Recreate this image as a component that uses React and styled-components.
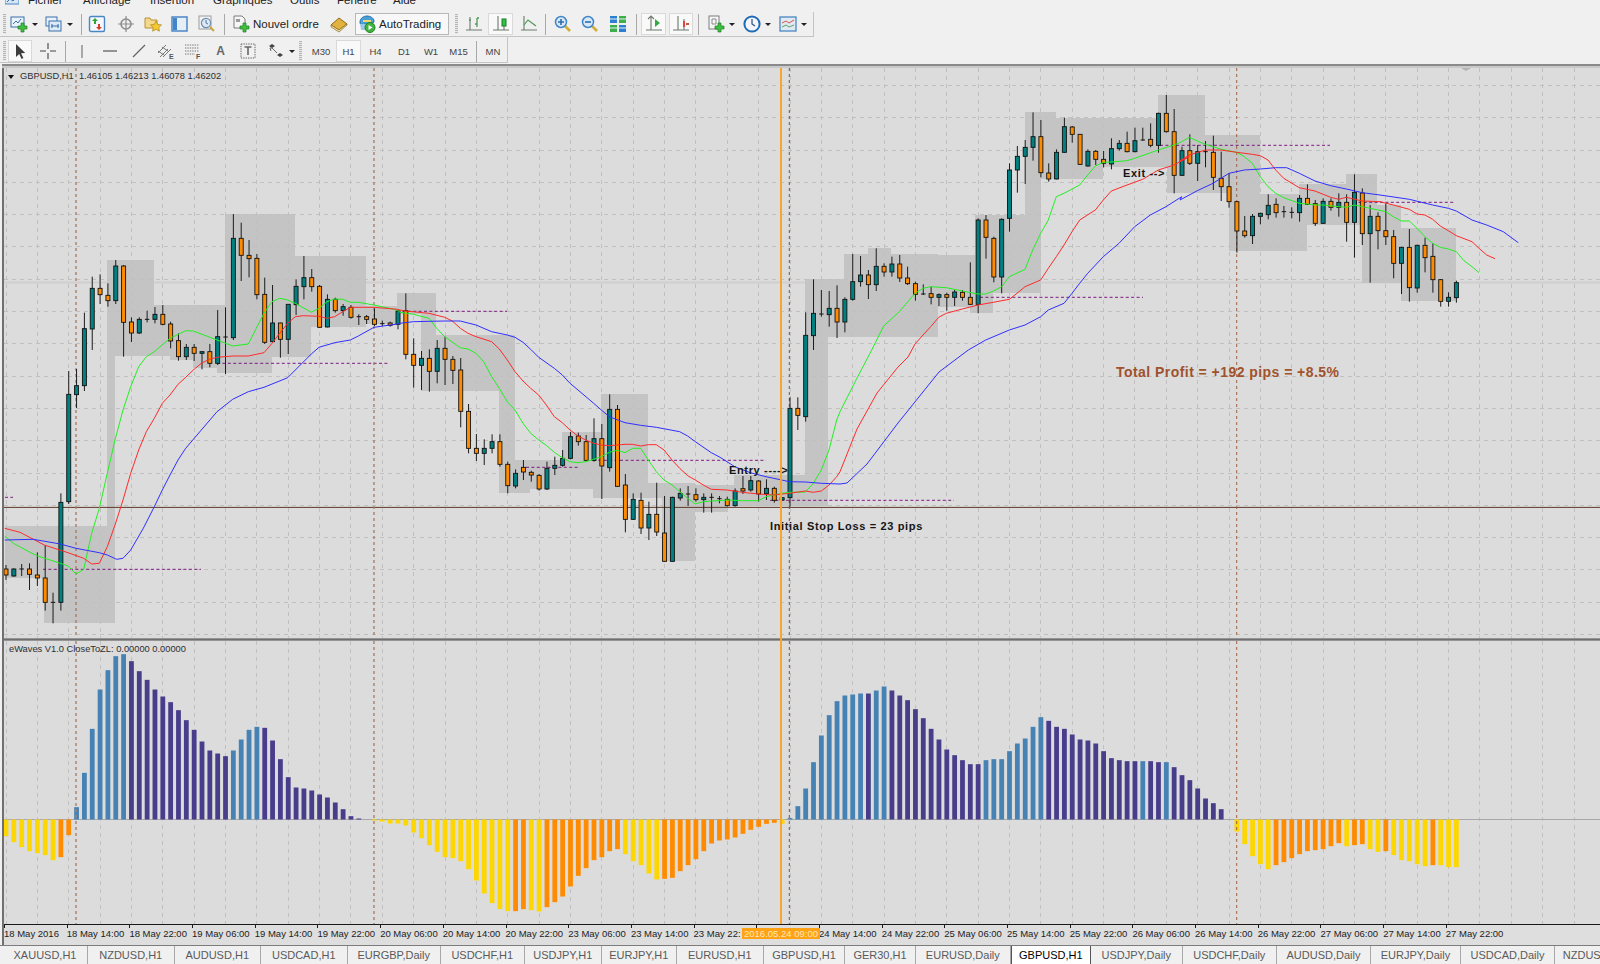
import styled, { createGlobalStyle } from "styled-components";

const GlobalStyle = createGlobalStyle`
  html, body { margin: 0; padding: 0; background: #f0f0f0; }
  body { width: 1600px; height: 964px; overflow: hidden; font-family: "Liberation Sans", Arial, sans-serif; }
`;

const barX = (i) => 6 + 7.84 * i;

// candles, read from the chart: [high, top, bottom, low, colour]  O orange, T teal, D doji
// every group has its own y offset, values are 3x
const candleGroups = [
  { off: 200, start: 0, rows: [
    [1095,1107,1125,1140,"O"],[1105,1107,1128,1130,"T"],[1092,1107,1107,1128,"D"],[1090,1107,1123,1170,"O"],[1057,1125,1134,1158,"O"],[1035,1134,1207,1232,"O"],
    [1178,1207,1207,1270,"D"],[880,907,1207,1232,"T"],[513,583,905,912,"T"],[507,557,584,624,"T"],[338,386,557,573,"T"],[230,265,387,450,"T"],
    [223,265,284,312,"O"],[250,286,302,320,"O"],[180,198,302,312,"T"],[195,198,367,470,"O"],[352,366,399,426,"O"],[352,358,399,402,"T"],
    [332,358,358,367,"D"],[321,343,358,370,"T"],[315,343,373,376,"O"],[365,372,423,445,"O"],[400,422,470,482,"O"],[432,442,470,480,"T"],
    [432,442,460,483,"O"],[455,455,460,508,"T"],[432,455,490,502,"O"],[330,410,490,495,"T"],[322,411,411,522,"D"],[42,115,413,420,"T"],
    [68,115,166,243,"O"],[120,166,176,232,"O"],[162,175,284,298,"O"],[233,283,427,432,"O"],[255,369,425,428,"T"],[368,369,418,473,"O"],
    [313,313,418,462,"T"],[238,259,314,345,"T"],[168,233,260,298,"T"],[207,233,260,275,"O"],[255,259,382,384,"O"],[283,298,381,382,"T"],
    [293,298,332,338,"O"],[312,320,332,347,"T"],[315,322,352,356,"O"],[343,350,350,375,"D"],[345,350,358,372,"O"],[325,357,373,378,"O"],
    [362,371,371,378,"D"],[365,369,376,380,"O"],[330,333,373,388,"T"],
  ]},
  { off: 280, start: 51, rows: [
    [40,92,223,238,"O"],[175,223,256,323,"O"],[213,235,256,330,"T"],[208,235,274,335,"O"],[180,205,274,310,"T"],[170,205,238,315,"O"],
    [228,238,271,312,"O"],[234,270,394,442,"O"],[372,394,505,520,"O"],[462,505,520,543,"O"],[478,505,520,555,"T"],[463,485,505,520,"T"],
    [463,485,553,560,"O"],[545,553,617,640,"O"],[568,580,618,625,"T"],[540,562,576,600,"O"],[572,577,585,605,"O"],[582,586,627,632,"O"],
    [545,565,627,630,"T"],[530,556,565,585,"T"],[510,535,556,560,"T"],[456,470,535,538,"T"],[458,468,485,497,"O"],[465,485,541,545,"O"],
    [415,476,541,545,"T"],[432,476,558,657,"O"],[343,388,563,575,"T"],[375,388,619,620,"O"],[582,615,718,757,"O"],[640,658,718,720,"T"],
    [638,661,744,762,"O"],[665,703,744,780,"T"],[608,703,756,768,"O"],[648,759,844,845,"O"],[650,652,844,845,"T"],[625,640,654,662,"T"],
    [618,642,642,678,"D"],[625,644,659,665,"O"],[640,652,659,698,"T"],[640,652,652,698,"D"],[648,656,656,670,"D"],[650,658,677,680,"O"],
    [625,633,677,680,"T"],[588,626,633,642,"O"],[588,602,630,635,"T"],[600,603,642,665,"O"],[598,625,641,660,"T"],[620,625,661,668,"O"],
    [653,653,660,660,"T"],[352,385,653,680,"T"],[352,385,406,450,"O"],[97,166,410,425,"T"],
  ]},
  { off: 90, start: 103, rows: [
    [568,670,737,780,"T"],[600,672,672,680,"D"],[603,655,674,710,"T"],[586,655,696,744,"O"],[622,628,696,727,"T"],[492,575,628,632,"T"],
    [498,555,575,590,"T"],[540,555,584,627,"O"],[475,529,584,603,"T"],[520,529,546,560,"O"],[500,522,546,560,"T"],[495,522,564,576,"O"],
    [530,564,581,585,"O"],[575,581,613,632,"O"],[583,612,612,615,"D"],[590,611,622,643,"O"],[610,614,622,648,"T"],[608,614,622,662,"O"],
    [600,606,622,648,"T"],[600,607,622,632,"O"],[517,622,643,645,"O"],[385,390,643,670,"T"],[375,390,442,506,"O"],[440,445,561,577,"O"],
    [385,388,561,610,"T"],[220,240,385,425,"T"],[168,199,240,308,"T"],[150,172,199,282,"T"],[67,140,172,212,"T"],[90,140,248,262,"O"],
    [220,249,267,275,"O"],[178,187,267,268,"T"],[83,110,187,188,"T"],[108,111,133,158,"O"],[132,133,223,225,"O"],[178,184,228,230,"T"],
    [180,184,208,225,"O"],[183,208,220,232,"O"],[145,176,222,238,"T"],[150,160,176,182,"T"],[125,160,185,187,"O"],[113,152,185,187,"T"],
    [113,150,150,152,"D"],[100,148,166,172,"O"],[68,70,166,188,"T"],[15,70,125,128,"O"],[57,125,256,310,"O"],[170,182,256,258,"T"],
    [133,182,220,225,"O"],[165,185,220,273,"T"],
  ]},
  { off: 90, start: 153, rows: [
    [153,185,185,232,"D"],[137,187,262,300,"O"],[185,265,290,333,"O"],[250,290,335,353,"O"],[333,335,423,488,"O"],[378,423,437,443,"O"],
    [372,379,437,462,"T"],[368,370,379,403,"T"],[313,346,374,388,"T"],[325,343,368,383,"O"],[348,365,365,383,"D"],[352,367,367,385,"D"],
    [315,325,368,395,"T"],[283,325,343,345,"O"],[330,341,400,408,"O"],[325,334,400,402,"T"],[325,334,352,362,"O"],[310,337,352,380,"T"],
    [313,337,397,455,"O"],[253,307,397,503,"T"],[295,309,431,465,"O"],[345,379,431,578,"T"],[367,379,422,478,"O"],[340,422,440,465,"O"],
    [420,440,520,565,"O"],[470,472,520,612,"T"],[417,472,593,635,"O"],[464,466,594,608,"T"],[443,466,503,547,"O"],[460,499,569,608,"O"],
    [567,569,634,650,"O"],[607,622,634,650,"T"],[572,578,623,638,"T"],
  ]},
];

const candles = candleGroups.flatMap((g) =>
  g.rows.map((r, n) => ({
    x: barX(g.start + n),
    hi: g.off + r[0] / 3,
    top: g.off + r[1] / 3,
    bot: g.off + r[2] / 3,
    lo: g.off + r[3] / 3,
    kind: r[4],
  }))
);

// grey session boxes [x1, y1, x2, y2], 3x, grouped by the crop they were read from
const boxGroups = [
  { ox: 0, oy: 200, rows: [
    [14,978,345,1135],[133,1135,345,1268],[321,468,345,978],[321,180,462,468],[462,315,675,468],[510,468,580,480],[580,468,650,505],
    [650,468,815,520],[675,42,885,468],[885,168,1097,382],[885,382,933,470],[815,468,885,470],[1050,318,1192,373],[1097,318,1192,373],
  ]},
  { ox: 400, oy: 280, rows: [
    [-9,40,108,103],[63,103,108,165],[63,165,345,332],[297,332,345,540],[297,540,486,628],[297,628,390,638],[486,455,604,628],
    [580,628,604,655],[604,343,745,655],[745,608,886,655],[785,655,886,842],[886,615,1003,678],[886,678,980,695],[1003,585,1215,678],[1215,0,1285,678],
  ]},
  { ox: 780, oy: 90, rows: [
    [76,568,145,1248],[145,568,193,742],[193,492,475,742],[264,475,333,492],[475,495,585,650],[570,650,640,668],[585,375,735,610],
    [585,610,640,650],[735,67,782,610],[782,67,827,268],[827,83,970,268],[970,83,1135,232],[1135,15,1160,232],[1160,15,1230,308],
  ]},
  { ox: 1180, oy: 90, rows: [
    [0,15,75,308],[75,135,148,308],[148,135,240,483],[240,313,380,483],[357,283,498,405],[498,253,592,405],[545,405,662,578],
    [592,345,662,405],[662,415,828,632],
  ]},
];

const boxes = boxGroups.flatMap((g) =>
  g.rows.map((r) => ({
    x: g.ox + r[0] / 3,
    y: g.oy + r[1] / 3,
    w: (r[2] - r[0]) / 3,
    h: (r[3] - r[1]) / 3,
  }))
);

const pts = (ox, oy, arr) => arr.map(([x, y]) => `${(ox + x / 3).toFixed(1)},${(oy + y / 3).toFixed(1)}`).join(" ");

const greenLine = [
  pts(0, 200, [[14,1008],[40,1030],[87,1055],[110,1067],[181,1090],[204,1098],[228,1122],[251,1108],[275,1000],[298,925],[322,820],[345,720],[369,630],[392,560],[416,500],[439,470],[463,455],[510,415],[557,392],[580,393],[651,420],[698,438],[745,432],[769,385],[792,340],[816,305],[839,295],[863,300],[886,310],[934,337],[957,325],[981,305],[1004,297],[1028,298],[1051,307],[1075,307],[1122,315],[1192,330]]),
  pts(400, 280, [[0,97],[40,103],[87,115],[110,145],[134,170],[181,203],[204,207],[228,220],[251,245],[275,290],[298,325],[322,365],[345,390],[369,430],[392,460],[416,480],[440,497],[463,517],[487,533],[510,545],[534,548],[557,545],[581,538],[604,530],[628,517],[652,511],[675,518],[698,505],[722,505],[745,540],[769,575],[792,600],[816,615],[839,635],[863,655],[886,672],[910,665],[934,663],[957,662],[981,660],[1027,662],[1075,662],[1098,650],[1122,645],[1145,640],[1168,637],[1216,636],[1240,610],[1264,570],[1287,510],[1310,420],[1320,395]]),
  "856,380",
  pts(780, 90, [[275,780],[311,708],[358,665],[405,610],[429,595],[452,590],[499,593],[547,603],[594,612],[617,612],[640,603],[665,590],[688,560],[735,538],[758,480],[782,430],[805,390],[829,320],[852,310],[899,285],[923,255],[946,228],[970,217],[994,216],[1041,212],[1064,205],[1135,180],[1182,165],[1205,155],[1228,142]]),
  pts(1180, 90, [[52,153],[76,163],[123,178],[170,187],[193,200],[217,220],[241,260],[264,290],[287,310],[311,323],[358,340],[382,342],[405,345],[429,345],[476,350],[499,352],[523,345],[547,350],[594,360],[617,365],[640,380],[664,393],[688,393],[711,415],[735,440],[758,460],[781,472],[805,477],[829,485],[852,512],[876,530],[897,548]]),
].join(" ");

const redLine = [
  pts(0, 200, [[14,985],[60,997],[133,1035],[204,1058],[251,1075],[275,1092],[298,1090],[322,1040],[345,975],[369,900],[392,820],[416,750],[439,695],[463,655],[487,610],[510,585],[534,553],[557,532],[580,510],[604,490],[628,478],[651,472],[698,468],[745,468],[792,458],[816,430],[839,400],[863,370],[886,350],[910,347],[957,349],[981,355],[1004,350],[1028,335],[1051,322],[1122,322],[1192,328]]),
  pts(400, 280, [[0,90],[16,93],[87,100],[134,112],[157,123],[181,145],[204,160],[228,170],[275,185],[298,207],[322,240],[345,275],[369,303],[392,325],[416,345],[439,375],[463,410],[487,428],[510,450],[534,468],[557,480],[581,490],[604,495],[628,497],[652,495],[675,493],[698,493],[722,498],[745,494],[769,494],[792,510],[816,540],[839,565],[863,587],[886,600],[910,615],[934,628],[981,630],[1027,637],[1075,642],[1122,645],[1168,640],[1216,633],[1240,637],[1264,633],[1287,615],[1310,590],[1320,575]]),
  "857,429 877,393 898,367 908,357",
  pts(780, 90, [[405,762],[429,735],[452,710],[476,682],[499,670],[547,657],[594,645],[640,637],[688,628],[711,610],[735,590],[782,570],[805,535],[829,500],[852,465],[876,425],[899,390],[946,360],[970,330],[994,303],[1041,285],[1088,268],[1135,240],[1182,225],[1228,200]]),
  pts(1180, 90, [[0,212],[28,195],[76,180],[123,180],[170,187],[217,193],[241,197],[264,210],[287,240],[311,265],[358,293],[405,303],[452,322],[476,328],[499,322],[547,333],[600,335],[640,345],[688,358],[711,372],[735,375],[758,388],[781,408],[805,422],[829,437],[876,455],[897,475],[920,495],[945,506]]),
].join(" ");

const blueLine = [
  pts(0, 200, [[14,1020],[100,1018],[181,1032],[228,1045],[298,1058],[322,1065],[350,1078],[369,1075],[392,1050],[430,985],[463,920],[487,870],[510,825],[534,780],[557,745],[604,690],[651,635],[698,598],[745,575],[792,562],[863,533],[886,510],[934,462],[957,442],[1004,428],[1051,420],[1075,408],[1122,382],[1192,372]]),
  pts(400, 280, [[0,130],[40,125],[87,124],[134,123],[181,123],[228,135],[275,155],[322,165],[345,172],[369,187],[392,208],[416,232],[463,265],[487,285],[510,310],[534,330],[581,370],[604,390],[628,410],[675,428],[722,436],[769,442],[839,455],[863,468],[886,485],[934,518],[957,530],[981,545],[1004,560],[1051,578],[1098,590],[1145,600],[1168,605],[1216,606],[1264,610],[1320,612]]),
  "847,483 867,464 898,423 939,372",
  pts(780, 90, [[565,780],[617,750],[688,720],[735,705],[782,680],[805,660],[852,640],[876,610],[899,580],[923,550],[970,500],[1017,460],[1064,410],[1111,375],[1158,350],[1205,320]]),
  pts(1180, 90, [[0,330],[52,302],[99,280],[147,250],[193,240],[241,237],[287,233],[320,233],[358,250],[405,273],[452,287],[499,297],[547,308],[600,315],[688,328],[758,345],[805,355],[829,363],[876,390],[920,405],[970,425],[1015,458]]),
].join(" ");

// purple levels [x1, x2, y]
const levels = [
  [5, 13, 497.3],[43, 201, 569.3],[217, 389, 363.3],[397, 507, 311.3],[526, 578, 467.3],[593, 766, 460.3],
  [770, 954, 500.3],[980, 1143, 297.3],[1160, 1330, 145.3],[1353, 1455, 202.3],
];

// histogram ends, 3x, zero line at 568.  L light blue, D dark blue, Y yellow, O orange
const waves = `618Y 636Y 651Y 663Y 669Y 675Y 690Y 681O 615O 531L 428L 296L 178L 120L 78L 72L 93D 123D 149D 178D 199D 216D 240D 270D 299D 334D 361D 370D 378D
361L 328L 299L 290L 293D 331D 387D 441D 472D 475D 481D 493D 502D 517D 537D 558D 565D 568D 571Y 574Y 580Y 580Y 586Y 607Y 624Y 645Y 665Y 681Y 684Y 693Y 717Y
751Y 790Y 819Y 837Y 843Y 843O 837O 840Y 844Y 831O 816O 799O 769O 737O 714O 690O 681O 663O 657O 672Y 693Y 705Y 730Y 748Y 746O 743O 723O 705O 687O 663O 640O
631O 628O 622O 611O 599O 590O 581O 578O 581Y 564L 528L 475L 396L 316L 255L 213L 196L 193L 190L 190D 181L 169L 181D 196D 210D 237D 264D 296D 328D 358D 375D
390D 402D 402D 390L 387L 387L 363L 340L 325L 290L 261L 272D 290D 296D 313D 328D 331D 340D 363D 384D 390D 393D 393D 393L 393D 396D 396L 411D 435D 450D 475D
505D 519D 537D 568D 604Y 642Y 678Y 702Y 717Y 705O 696O 684O 672O 663O 660O 657O 648O 639O 648Y 645O 642O 657Y 665Y 663O 675Y 690Y 693Y 702Y 708Y 705O 705Y 711Y 711Y`
  .split(/\s+/)
  .map((s) => ({ z: parseInt(s, 10), kind: s[s.length - 1] }));

const waveColors = { L: "#4682b4", D: "#483d8b", Y: "#ffd700", O: "#ff8c00" };
const ZERO_Y = 819.5;

const gridXs = Array.from({ length: 51 }, (_, k) => barX(4 * k));
const gridYs = Array.from({ length: 18 }, (_, k) => 85.4 + 32.3 * k);

// the 24 May 06:00 label sits under the cursor date, only part of the one before it shows
const dates = [
  "18 May 2016","18 May 14:00","18 May 22:00","19 May 06:00","19 May 14:00","19 May 22:00","20 May 06:00","20 May 14:00",
  "20 May 22:00","23 May 06:00","23 May 14:00","23 May 22:","","24 May 14:00","24 May 22:00","25 May 06:00",
  "25 May 14:00","25 May 22:00","26 May 06:00","26 May 14:00","26 May 22:00","27 May 06:00","27 May 14:00","27 May 22:00",
];

const tabs = [
  ["XAUUSD,H1", 85],["NZDUSD,H1", 86.5],["AUDUSD,H1", 86.5],["USDCAD,H1", 86.5],["EURGBP,Daily", 93.5],["USDCHF,H1", 83.5],
  ["USDJPY,H1", 77.5],["EURJPY,H1", 74.5],["EURUSD,H1", 87.5],["GBPUSD,H1", 81],["GER30,H1", 71],["EURUSD,Daily", 94.7],
  ["GBPUSD,H1", 80.3, true],["USDJPY,Daily", 91.6],["USDCHF,Daily", 94.4],["AUDUSD,Daily", 94],["EURJPY,Daily", 90],["USDCAD,Daily", 94],["NZDUSD,Daily", 90],
];

const menus = [["Fichier", 55],["Affichage", 67],["Insertion", 63],["Graphiques", 77],["Outils", 47],["Fenêtre", 56],["Aide", 40]];

const PeriodLines = ({ y1, y2 }) => (
  <>
    <line x1="76" x2="76" y1={y1} y2={y2} stroke="#a87f6c" strokeWidth="1.4" strokeDasharray="3 3" />
    <line x1="374" x2="374" y1={y1} y2={y2} stroke="#a87f6c" strokeWidth="1.4" strokeDasharray="3 3" />
    <line x1="789.3" x2="789.3" y1={y1} y2={y2} stroke="#80503a" strokeDasharray="3 3" />
    <line x1="1236.7" x2="1236.7" y1={y1} y2={y2} stroke="#a0603f" strokeDasharray="3 3" />
  </>
);

const GridXs = ({ y1, y2 }) => (
  <g stroke="#c0c0c0" strokeDasharray="4 4" shapeRendering="crispEdges">
    {gridXs.map((x) => <line key={x} x1={x} x2={x} y1={y1} y2={y2} />)}
  </g>
);

const MainChart = () => (
  <PaneSvg width="1596" height="570" viewBox="4 68 1596 570">
    <rect x="4" y="68" width="1596" height="570" fill="#dcdcdc" />
    <rect x="4" y="281.5" width="1596" height="2" fill="#cfcfcf" />
    <g fill="#c4c4c4" shapeRendering="crispEdges">
      {boxes.map((b, n) => <rect key={n} x={b.x} y={b.y} width={b.w} height={b.h} />)}
    </g>
    <GridXs y1={68} y2={638} />
    <g stroke="#c0c0c0" strokeDasharray="4 4" shapeRendering="crispEdges">
      {gridYs.map((y) => <line key={y} x1="4" x2="1600" y1={y} y2={y} />)}
    </g>
    <line x1="4" x2="1600" y1="507.4" y2="507.4" stroke="#5f3a2a" />
    <polygon points="1461,68 1471,68 1466,71" fill="#b4b4b4" />
    {levels.map(([a, b, y]) => (
      <line key={a} x1={a} x2={b} y1={y} y2={y} stroke="#7d1a7d" strokeDasharray="3 2.4" />
    ))}
    <PeriodLines y1={68} y2={638} />
    {candles.map((c, n) => (
      <g key={n}>
        <line x1={c.x} x2={c.x} y1={c.hi} y2={c.lo} stroke="#1c1c1c" strokeWidth="1" />
        {c.kind === "D" ? (
          <rect x={c.x - 2.2} y={c.top - 0.5} width="4.4" height="1" fill="#111" />
        ) : (
          <rect x={c.x - 2} y={c.top} width="4" height={Math.max(c.bot - c.top, 1)} fill={c.kind === "O" ? "#ff8c00" : "#008080"} stroke="#111" strokeWidth="0.9" />
        )}
      </g>
    ))}
    <polyline points={greenLine} fill="none" stroke="#22f022" strokeWidth="1" />
    <polyline points={redLine} fill="none" stroke="#ff2a2a" strokeWidth="1" />
    <polyline points={blueLine} fill="none" stroke="#2f2fff" strokeWidth="1" />
    <ChartNote x="729" y="474">Entry ----&gt;</ChartNote>
    <ChartNote x="770" y="530">Initial Stop Loss = 23 pips</ChartNote>
    <ChartNote x="1123" y="177">Exit --&gt;</ChartNote>
    <ProfitNote x="1116" y="377">Total Profit = +192 pips = +8.5%</ProfitNote>
  </PaneSvg>
);

const WavePane = () => (
  <PaneSvg width="1596" height="283" viewBox="4 641 1596 283">
    <rect x="4" y="641" width="1596" height="283" fill="#dcdcdc" />
    <GridXs y1={641} y2={924} />
    <line x1="4" x2="1600" y1={ZERO_Y} y2={ZERO_Y} stroke="#a9a9a9" />
    {waves.map((b, i) => {
      const v = (b.z - 568) / 3;
      return (
        <rect
          key={i}
          x={barX(i) - 2.4}
          y={v < 0 ? ZERO_Y + v : ZERO_Y}
          width="4.8"
          height={Math.abs(v)}
          fill={waveColors[b.kind]}
        />
      );
    })}
    <PeriodLines y1={641} y2={924} />
  </PaneSvg>
);

// toolbar icons
const Ico = ({ children, size = 18 }) => (
  <svg width={size} height={size} viewBox="0 0 18 18">{children}</svg>
);

const Plus = ({ x = 0, y = 0 }) => (
  <path transform={`translate(${x} ${y})`} d="M3 0h3v3h3v3H6v3H3V6H0V3h3z" fill="#3fbf3f" stroke="#1c7f1c" strokeWidth="0.7" />
);

const NewChartIcon = () => (
  <Ico>
    <rect x="1" y="2" width="13" height="10" fill="#eaf2fb" stroke="#3b70aa" />
    <path d="M3 9l3-3 2 2 3-4" fill="none" stroke="#3b70aa" />
    <Plus x="8" y="8" />
  </Ico>
);
const ProfilesIcon = () => (
  <Ico>
    <rect x="1" y="2" width="11" height="9" fill="#eaf2fb" stroke="#3b70aa" />
    <rect x="4" y="6" width="12" height="10" fill="#dce9f7" stroke="#3b70aa" />
    <path d="M6 11h8M7 9v4M13 9v4" stroke="#3b70aa" fill="none" />
  </Ico>
);
const MarketIcon = () => (
  <Ico>
    <rect x="1.5" y="1.5" width="15" height="15" rx="1.5" fill="#f4f8fc" stroke="#4a86c0" strokeWidth="1.4" />
    <path d="M7 3l3 3H8v3H6V6H4z" fill="#2fa62f" />
    <path d="M11 15l-3-3h2V9h2v3h2z" fill="#d83a2a" />
  </Ico>
);
const NavIcon = () => (
  <Ico>
    <circle cx="9" cy="9" r="5" fill="none" stroke="#8d8d8d" strokeWidth="1.6" />
    <path d="M9 1v16M1 9h16" stroke="#8d8d8d" strokeWidth="1.2" />
  </Ico>
);
const FavoritesIcon = () => (
  <Ico>
    <path d="M1 3h5l1 2h6v8H1z" fill="#f4d98a" stroke="#b8923a" />
    <path d="M12 6l1.7 3.4 3.8.5-2.7 2.6.6 3.7-3.4-1.8-3.4 1.8.6-3.7-2.7-2.6 3.8-.5z" fill="#f5c92e" stroke="#a88420" strokeWidth="0.7" />
  </Ico>
);
const TerminalIcon = () => (
  <Ico>
    <rect x="1" y="2" width="15" height="14" fill="#e6eef7" stroke="#3f7fc0" strokeWidth="1.4" />
    <rect x="2" y="3" width="4" height="12" fill="#3f86cc" />
  </Ico>
);
const TesterIcon = () => (
  <Ico>
    <rect x="1" y="1" width="12" height="13" fill="#f2f2f2" stroke="#9c9c9c" />
    <circle cx="8" cy="8" r="4.6" fill="#dce8f4" stroke="#6a8fb5" strokeWidth="1.2" />
    <path d="M8 5v3l2 1" stroke="#55779b" fill="none" />
    <path d="M12 12l4 4" stroke="#c9a53a" strokeWidth="2" />
  </Ico>
);
const OrderIcon = () => (
  <Ico>
    <path d="M2 1h8l3 3v9H2z" fill="#f6f6f6" stroke="#7d7d7d" />
    <path d="M4 4h4v3H4z" fill="#9a9a9a" />
    <Plus x="8" y="8" />
  </Ico>
);
const EditorIcon = () => (
  <Ico>
    <path d="M1 10l8-7 8 6-8 6z" fill="#e2b33c" stroke="#8d6a1c" />
    <path d="M1 10v2l8 5 8-7V9l-8 6z" fill="#f3e2ae" stroke="#8d6a1c" strokeWidth="0.7" />
  </Ico>
);
const AutoIcon = () => (
  <Ico>
    <path d="M2 7c0-4 4-6 7-6s7 2 7 5-3 3-7 3-7 2-7-2z" fill="#4aa0d8" stroke="#2a6fa8" />
    <path d="M5 5h8v2H5z" fill="#f0d668" />
    <path d="M2 9h6v6H3z" fill="#9cc8e8" />
    <circle cx="12" cy="12.5" r="5" fill="#3fb53f" stroke="#1f7f1f" />
    <path d="M10.5 10l4 2.5-4 2.5z" fill="#fff" />
  </Ico>
);
const Axes = () => <path d="M6 1v14M1 15h16M12 4v11" stroke="#6d7a6d" strokeWidth="1.1" fill="none" />;
const BarsIcon = () => (
  <Ico>
    <path d="M5 2v13M1 15h16" stroke="#6d7a6d" strokeWidth="1.1" fill="none" />
    <path d="M4 5h2M12 3v9M12 3h2M10 9h2" stroke="#4d9a55" strokeWidth="1.3" fill="none" />
  </Ico>
);
const CandleIcon = () => (
  <Ico>
    <Axes />
    <rect x="10" y="4" width="4" height="7" fill="#2fc23f" stroke="#1c7f2a" />
  </Ico>
);
const LineIcon = () => (
  <Ico>
    <path d="M4 1v14M1 15h16" stroke="#6d7a6d" strokeWidth="1.1" fill="none" />
    <path d="M4 10l4-5 8 6" stroke="#4d9a55" strokeWidth="1.2" fill="none" />
  </Ico>
);
const Lens = ({ sign }) => (
  <Ico>
    <path d="M11 11l5 5" stroke="#d1ad3a" strokeWidth="2.6" />
    <circle cx="7" cy="7" r="5.5" fill="#d8e8f6" stroke="#3f86c8" strokeWidth="1.5" />
    <path d={sign === "+" ? "M4 7h6M7 4v6" : "M4 7h6"} stroke="#2d6fb0" strokeWidth="1.6" />
  </Ico>
);
const TileIcon = () => (
  <Ico>
    <rect x="1" y="1" width="7" height="7" fill="#2d7fd0" />
    <rect x="10" y="1" width="7" height="7" fill="#3cae4a" />
    <rect x="1" y="10" width="7" height="7" fill="#3cae4a" />
    <rect x="10" y="10" width="7" height="7" fill="#2d7fd0" />
    <path d="M1 4h7M10 4h7M1 13h7M10 13h7" stroke="#e8f2fb" />
  </Ico>
);
const ScrollIcon = () => (
  <Ico>
    <path d="M6 1v14M1 15h16M3 4l3-3 3 3" stroke="#6d7a6d" strokeWidth="1.1" fill="none" />
    <path d="M10 4l5 4-5 4z" fill="#35a845" />
  </Ico>
);
const ShiftIcon = () => (
  <Ico>
    <Axes />
    <path d="M12 6v6M14 9h3" stroke="#d84a3a" strokeWidth="2" />
  </Ico>
);
const TemplateIcon = () => (
  <Ico>
    <rect x="2" y="1" width="10" height="13" fill="#f6f6f6" stroke="#7d7d7d" />
    <path d="M5 4h4v5H5z" fill="none" stroke="#8a8a8a" />
    <Plus x="8" y="8" />
  </Ico>
);
const ClockIcon = () => (
  <Ico>
    <circle cx="9" cy="9" r="7.6" fill="#f2f6fb" stroke="#1f6bb5" strokeWidth="2" />
    <path d="M9 4v5l3 2" stroke="#2a4f78" strokeWidth="1.2" fill="none" />
  </Ico>
);
const IndicatorIcon = () => (
  <Ico>
    <rect x="1" y="2" width="16" height="14" fill="#dfeaf6" stroke="#4a86c0" strokeWidth="1.3" />
    <path d="M3 8l4-2 3 2 5-3" stroke="#d9553f" fill="none" />
    <path d="M3 12l4-2 3 2 5-2" stroke="#5aa85a" fill="none" />
  </Ico>
);
const ArrowIcon = () => (
  <Ico>
    <path d="M5 2v13l3.2-3 2.4 5 1.8-.9-2.4-4.8 4.2-.3z" fill="#3c3c3c" />
  </Ico>
);
const CrossIcon = () => (
  <Ico>
    <path d="M9 1v6M9 11v6M1 9h6M11 9h6" stroke="#444" strokeWidth="1.1" />
  </Ico>
);
const VLineIcon = () => <Ico><path d="M9 3v13" stroke="#777" strokeWidth="1.2" /></Ico>;
const HLineIcon = () => <Ico><path d="M2 9h14" stroke="#555" strokeWidth="1.2" /></Ico>;
const TrendIcon = () => <Ico><path d="M3 15L15 3" stroke="#666" strokeWidth="1.2" /></Ico>;
const ChannelIcon = () => (
  <Ico>
    <path d="M1 11l8-8M3 15l8-8M6 15l8-8M1 9l6 4M5 5l6 4" stroke="#777" strokeWidth="1" fill="none" />
    <IconLetter x="12" y="17">E</IconLetter>
  </Ico>
);
const FiboIcon = () => (
  <Ico>
    <path d="M1 3h14M1 6h14M1 9h14M1 12h10" stroke="#777" strokeDasharray="1.4 1" fill="none" />
    <IconLetter x="12" y="17">F</IconLetter>
  </Ico>
);
const TextBoxIcon = () => (
  <Ico>
    <rect x="2" y="2" width="14" height="14" fill="none" stroke="#666" strokeDasharray="1.4 1" />
    <path d="M5.5 5h7M9 5v8" stroke="#666" strokeWidth="1.6" />
  </Ico>
);
const ArrowsIcon = () => (
  <Ico>
    <path d="M2 4l3-2 3 2-3 2zM10 13l3-2 3 2-3 2z" fill="#444" />
    <path d="M5 6l5 5M4 9l-1-3 3 0" stroke="#666" fill="none" />
  </Ico>
);

const Toolbars = () => (
  <>
    <Toolbar $w={814} $h={25}>
      <Grip />
      <ToolButton $w={24} $ml={1}><NewChartIcon /></ToolButton>
      <DropArrow />
      <ToolButton $w={24} $ml={3}><ProfilesIcon /></ToolButton>
      <DropArrow />
      <Separator $ml={7} />
      <ToolButton $w={28} $ml={1}><MarketIcon /></ToolButton>
      <ToolButton $w={29}><NavIcon /></ToolButton>
      <ToolButton $w={26}><FavoritesIcon /></ToolButton>
      <ToolButton $w={27}><TerminalIcon /></ToolButton>
      <ToolButton $w={28}><TesterIcon /></ToolButton>
      <Separator $ml={3} />
      <LabelButton $w={97} $ml={2}><OrderIcon />Nouvel ordre</LabelButton>
      <ToolButton $w={24} $ml={3}><EditorIcon /></ToolButton>
      <AutoButton $w={94} $ml={4}><AutoIcon />AutoTrading</AutoButton>
      <Grip $ml={6} />
      <ToolButton $w={24} $ml={4}><BarsIcon /></ToolButton>
      <ToolButton $w={25} $ml={2} $pressed><CandleIcon /></ToolButton>
      <ToolButton $w={25} $ml={3}><LineIcon /></ToolButton>
      <Separator $ml={4} />
      <ToolButton $w={24} $ml={5}><Lens sign="+" /></ToolButton>
      <ToolButton $w={24} $ml={3}><Lens sign="-" /></ToolButton>
      <ToolButton $w={24} $ml={4}><TileIcon /></ToolButton>
      <Separator $ml={6} />
      <ToolButton $w={25} $ml={4} $pressed><ScrollIcon /></ToolButton>
      <ToolButton $w={24} $ml={3} $pressed><ShiftIcon /></ToolButton>
      <Separator $ml={5} />
      <ToolButton $w={24} $ml={5}><TemplateIcon /></ToolButton>
      <DropArrow />
      <ToolButton $w={24} $ml={4}><ClockIcon /></ToolButton>
      <DropArrow />
      <ToolButton $w={24} $ml={4}><IndicatorIcon /></ToolButton>
      <DropArrow />
    </Toolbar>
    <Toolbar $w={508} $h={26} $pt={3}>
      <Grip />
      <ToolButton $w={24} $ml={2} $pressed><ArrowIcon /></ToolButton>
      <ToolButton $w={25} $ml={3}><CrossIcon /></ToolButton>
      <Separator $ml={5} />
      <ToolButton $w={24} $ml={4}><VLineIcon /></ToolButton>
      <ToolButton $w={26} $ml={3}><HLineIcon /></ToolButton>
      <ToolButton $w={27} $ml={2}><TrendIcon /></ToolButton>
      <ToolButton $w={27}><ChannelIcon /></ToolButton>
      <ToolButton $w={28}><FiboIcon /></ToolButton>
      <LetterButton $w={27}>A</LetterButton>
      <ToolButton $w={28}><TextBoxIcon /></ToolButton>
      <ToolButton $w={24} $ml={2}><ArrowsIcon /></ToolButton>
      <DropArrow />
      <Grip $ml={3} />
      <PeriodButton $w={28} $ml={5}>M30</PeriodButton>
      <PeriodButton $w={25} $ml={1} $pressed>H1</PeriodButton>
      <PeriodButton $w={29}>H4</PeriodButton>
      <PeriodButton $w={28}>D1</PeriodButton>
      <PeriodButton $w={26}>W1</PeriodButton>
      <PeriodButton $w={29}>M15</PeriodButton>
      <Separator $ml={3} />
      <PeriodButton $w={32}>MN</PeriodButton>
    </Toolbar>
  </>
);

const App = () => (
  <Page>
    <GlobalStyle />
    <MenuBar>
      <AppMark viewBox="0 6 14 5" width="14" height="5">
        <rect x="0" y="0" width="14" height="10" fill="#d7e6f5" stroke="#4a86c0" />
        <path d="M2 8l3-3 3 2 4-4" stroke="#3b70aa" fill="none" />
      </AppMark>
      {menus.map(([name, w]) => <MenuItem key={name} $w={w}>{name}</MenuItem>)}
    </MenuBar>
    <Toolbars />
    <ChartFrame>
      <TopEdge />
      <Pane>
        <PaneTitle>
          <TitleArrow />GBPUSD,H1&nbsp;&nbsp;1.46105 1.46213 1.46078 1.46202
        </PaneTitle>
        <MainChart />
      </Pane>
      <PaneSplitter />
      <Pane>
        <WaveTitle>eWaves V1.0 CloseToZL: 0.00000 0.00000</WaveTitle>
        <WavePane />
      </Pane>
      <TimeAxis>
        {dates.map((d, n) => <TimeLabel key={n}>{d}</TimeLabel>)}
        <CursorDate>2016.05.24 09:00</CursorDate>
      </TimeAxis>
      <CursorLine />
    </ChartFrame>
    <TabBar>
      {tabs.map(([name, w, active], n) => (
        <Tab key={n} $w={w} $active={active}>{name}</Tab>
      ))}
    </TabBar>
  </Page>
);

const Page = styled.div`
  width: 1600px;
  height: 964px;
  display: flex;
  flex-direction: column;
  overflow: hidden;
  background: #f0f0f0;
`;

const MenuBar = styled.div`
  height: 12px;
  flex: none;
  display: flex;
  overflow: hidden;
  padding-left: 5px;
`;

const AppMark = styled.svg`
  flex: none;
  margin-right: 9px;
`;

const MenuItem = styled.div`
  width: ${(p) => p.$w}px;
  flex: none;
  margin-top: -7px;
  font-size: 11.5px;
  line-height: 14px;
  color: #222;
`;

const Toolbar = styled.div`
  width: ${(p) => p.$w}px;
  height: ${(p) => p.$h}px;
  flex: none;
  box-sizing: border-box;
  display: flex;
  align-items: center;
  padding-left: 3px;
  padding-top: ${(p) => p.$pt || 0}px;
  border-bottom: 1px solid #c4c4c4;
  border-right: 1px solid #c4c4c4;
`;

const Grip = styled.div`
  width: 3px;
  height: 20px;
  flex: none;
  margin-left: ${(p) => p.$ml || 0}px;
  background: repeating-linear-gradient(#b5b5b5 0 1px, #e8e8e8 1px 2px);
`;

const Separator = styled.div`
  width: 1px;
  height: 21px;
  flex: none;
  margin-left: ${(p) => p.$ml || 0}px;
  background: #a8a8a8;
`;

const ToolButton = styled.div`
  width: ${(p) => p.$w}px;
  height: 22px;
  flex: none;
  box-sizing: border-box;
  margin-left: ${(p) => p.$ml || 0}px;
  display: flex;
  align-items: center;
  justify-content: center;
  background: ${(p) => (p.$pressed ? "#f9f9f9" : "transparent")};
  border: 1px solid ${(p) => (p.$pressed ? "#d9d9d9" : "transparent")};
`;

const LabelButton = styled(ToolButton)`
  justify-content: flex-start;
  gap: 3px;
  padding-left: 4px;
  font-size: 11.5px;
  color: #222;
`;

const AutoButton = styled(LabelButton)`
  background: #f8f8f8;
  border: 1px solid #b8b8b8;
  padding-left: 2px;
  font-size: 11.5px;
`;

const PeriodButton = styled(ToolButton)`
  font-size: 9.5px;
  color: #444;
`;

const LetterButton = styled(ToolButton)`
  font-size: 12px;
  font-weight: bold;
  color: #666;
`;

const DropArrow = styled.div`
  width: 8px;
  height: 22px;
  flex: none;
  display: flex;
  align-items: center;
  justify-content: center;
  &::after {
    content: "";
    border-left: 3px solid transparent;
    border-right: 3px solid transparent;
    border-top: 3px solid #222;
  }
`;

const IconLetter = styled.text`
  font-family: "Liberation Sans", Arial, sans-serif;
  font-size: 7px;
  font-weight: bold;
  fill: #555;
`;

const ChartFrame = styled.div`
  position: relative;
  flex: 1;
  min-height: 0;
  margin-left: 2px;
  border-left: 2px solid #707070;
  display: flex;
  flex-direction: column;
`;

const TopEdge = styled.div`
  height: 5px;
  flex: none;
  margin-left: -2px;
  background: linear-gradient(#f0f0f0 0 1px, #8a8a8a 1px 3px, #c9c9c9 3px 5px);
`;

const Pane = styled.div`
  position: relative;
  flex: none;
`;

const PaneSvg = styled.svg`
  display: block;
`;

const PaneTitle = styled.div`
  position: absolute;
  top: 3px;
  left: 4px;
  display: flex;
  align-items: center;
  font-size: 9.3px;
  line-height: 11px;
  color: #2e2e2e;
  white-space: pre;
`;

const TitleArrow = styled.span`
  width: 0;
  height: 0;
  margin-right: 6px;
  border-left: 3px solid transparent;
  border-right: 3px solid transparent;
  border-top: 4px solid #111;
`;

const WaveTitle = styled.div`
  position: absolute;
  top: 3px;
  left: 5px;
  font-size: 9.3px;
  line-height: 11px;
  color: #2e2e2e;
  white-space: pre;
`;

const PaneSplitter = styled.div`
  height: 3px;
  flex: none;
  background: linear-gradient(#a8a8a8, #6f6f6f 50%, #a8a8a8);
`;

const ChartNote = styled.text`
  font-family: "Liberation Sans", Arial, sans-serif;
  font-size: 11px;
  font-weight: bold;
  letter-spacing: 0.65px;
  fill: #151515;
`;

const ProfitNote = styled.text`
  font-family: "Liberation Sans", Arial, sans-serif;
  font-size: 14px;
  font-weight: bold;
  letter-spacing: 0.45px;
  fill: #a0522d;
`;

const TimeAxis = styled.div`
  position: relative;
  height: 21px;
  flex: none;
  box-sizing: border-box;
  display: flex;
  background: #dedede;
  border-top: 1px solid #1a1a1a;
`;

const TimeLabel = styled.div`
  position: relative;
  width: 62.7px;
  flex: none;
  padding-top: 3px;
  font-size: 9.5px;
  line-height: 11px;
  color: #222;
  white-space: nowrap;
  &::before {
    content: "";
    position: absolute;
    left: 0;
    top: 0;
    width: 1px;
    height: 3px;
    background: #1a1a1a;
  }
`;

const CursorDate = styled.div`
  position: absolute;
  left: 738px;
  top: 3px;
  width: 78px;
  height: 11px;
  font-size: 9.5px;
  line-height: 11px;
  text-align: center;
  color: #ffe7bb;
  background: #ffa214;
`;

const CursorLine = styled.div`
  position: absolute;
  left: 776px;
  top: 5px;
  bottom: 21px;
  width: 2px;
  background: #f7a52c;
`;

const TabBar = styled.div`
  height: 19px;
  flex: none;
  box-sizing: border-box;
  display: flex;
  padding-left: 3px;
  overflow: hidden;
  border-top: 1px solid #7c7c7c;
  background: #f0f0f0;
`;

const Tab = styled.div`
  width: ${(p) => p.$w}px;
  flex: none;
  box-sizing: border-box;
  font-size: 11px;
  line-height: 18px;
  text-align: center;
  white-space: nowrap;
  color: ${(p) => (p.$active ? "#000" : "#5a5a5a")};
  background: ${(p) => (p.$active ? "#fff" : "transparent")};
  border-right: 1px solid ${(p) => (p.$active ? "#555" : "#a8a8a8")};
  border-left: ${(p) => (p.$active ? "1px solid #555" : "none")};
`;

export default App;
